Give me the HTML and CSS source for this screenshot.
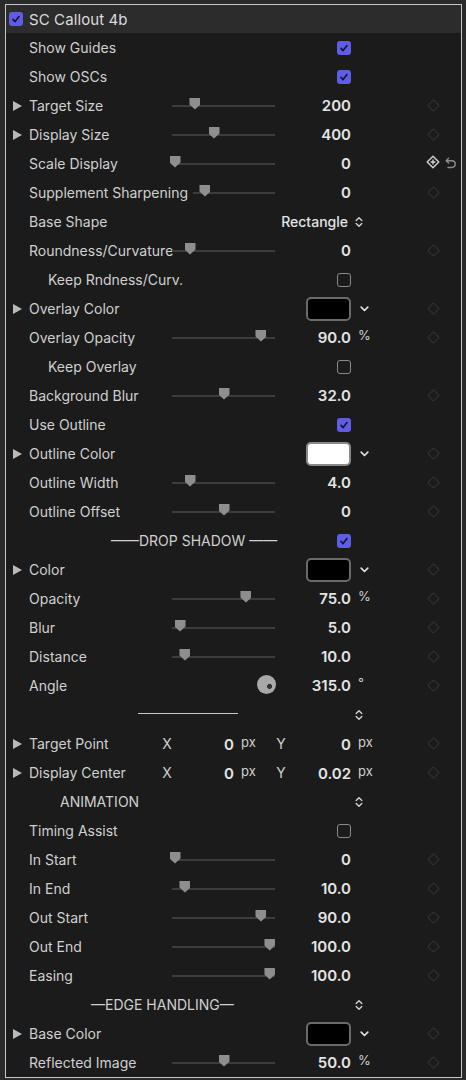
FILE: index.html
```html
<!DOCTYPE html>
<html>
<head>
<meta charset="utf-8">
<link rel="stylesheet" href="styles.css">
</head>
<body>
<div class="panel">
  <div class="head"><span class="cb on"><svg viewBox="0 0 14 14"><path d="M4 7.4l2.1 2.2L10 4.6"/></svg></span><span class="title">SC Callout 4b</span></div>

  <div class="row"><div class="lab">Show Guides</div><div class="val"><span class="cb on"><svg viewBox="0 0 14 14"><path d="M4 7.4l2.1 2.2L10 4.6"/></svg></span></div></div>
  <div class="row"><div class="lab">Show OSCs</div><div class="val"><span class="cb on"><svg viewBox="0 0 14 14"><path d="M4 7.4l2.1 2.2L10 4.6"/></svg></span></div></div>
  <div class="row"><div class="lab tri"><i></i>Target Size</div><div class="sl"><b style="--p:22.3%"></b></div><div class="val">200</div><div class="kf"><span class="dia"></span></div></div>
  <div class="row"><div class="lab tri"><i></i>Display Size</div><div class="sl"><b style="--p:40.8%"></b></div><div class="val">400</div><div class="kf"><span class="dia"></span></div></div>
  <div class="row"><div class="lab">Scale Display</div><div class="sl"><b style="--p:2.9%"></b></div><div class="val">0</div>
    <div class="kf"><svg class="kfon" viewBox="0 0 14 14"><path d="M7 1.2L12.8 7L7 12.8L1.2 7Z"/><path d="M7 4.6v4.8M4.6 7h4.8"/></svg></div>
    <div class="rs"><svg viewBox="0 0 12 13"><path d="M3.6 1.2L1.2 3.7l2.4 2.4M1.4 3.7h5.4a3.4 3.4 0 0 1 0 6.8H3"/></svg></div></div>
  <div class="row"><div class="lab">Supplement Sharpening</div><div class="sl short"><b style="--p:14.6%"></b></div><div class="val">0</div><div class="kf"><span class="dia"></span></div></div>
  <div class="row"><div class="lab">Base Shape</div><div class="val pop">Rectangle</div><div class="unit ud"><svg viewBox="0 0 8 12"><path d="M1.2 4.6L4 1.8l2.8 2.8M1.2 7.4L4 10.2l2.8-2.8"/></svg></div></div>
  <div class="row"><div class="lab">Roundness/Curvature</div><div class="sl"><b style="--p:17.5%"></b></div><div class="val">0</div><div class="kf"><span class="dia"></span></div></div>
  <div class="row"><div class="lab ind">Keep Rndness/Curv.</div><div class="val"><span class="cb"></span></div></div>
  <div class="row"><div class="lab tri"><i></i>Overlay Color</div><div class="val"><span class="sw"></span></div><div class="unit chev"><svg viewBox="0 0 9 6"><path d="M1.2 1.2l3.3 3.3 3.3-3.3"/></svg></div><div class="kf"><span class="dia"></span></div></div>
  <div class="row"><div class="lab">Overlay Opacity</div><div class="sl"><b style="--p:86.4%"></b></div><div class="val">90.0</div><div class="unit sup">%</div><div class="kf"><span class="dia"></span></div></div>
  <div class="row"><div class="lab ind">Keep Overlay</div><div class="val"><span class="cb"></span></div></div>
  <div class="row"><div class="lab">Background Blur</div><div class="sl"><b style="--p:50.5%"></b></div><div class="val">32.0</div><div class="kf"><span class="dia"></span></div></div>
  <div class="row"><div class="lab">Use Outline</div><div class="val"><span class="cb on"><svg viewBox="0 0 14 14"><path d="M4 7.4l2.1 2.2L10 4.6"/></svg></span></div></div>
  <div class="row"><div class="lab tri"><i></i>Outline Color</div><div class="val"><span class="sw white"></span></div><div class="unit chev"><svg viewBox="0 0 9 6"><path d="M1.2 1.2l3.3 3.3 3.3-3.3"/></svg></div><div class="kf"><span class="dia"></span></div></div>
  <div class="row"><div class="lab">Outline Width</div><div class="sl"><b style="--p:17.5%"></b></div><div class="val">4.0</div><div class="kf"><span class="dia"></span></div></div>
  <div class="row"><div class="lab">Outline Offset</div><div class="sl"><b style="--p:50.5%"></b></div><div class="val">0</div><div class="kf"><span class="dia"></span></div></div>
  <div class="row"><div class="lab wide ds">——DROP SHADOW ——</div><div class="val"><span class="cb on"><svg viewBox="0 0 14 14"><path d="M4 7.4l2.1 2.2L10 4.6"/></svg></span></div></div>
  <div class="row"><div class="lab tri"><i></i>Color</div><div class="val"><span class="sw"></span></div><div class="unit chev"><svg viewBox="0 0 9 6"><path d="M1.2 1.2l3.3 3.3 3.3-3.3"/></svg></div><div class="kf"><span class="dia"></span></div></div>
  <div class="row"><div class="lab">Opacity</div><div class="sl"><b style="--p:71.8%"></b></div><div class="val">75.0</div><div class="unit sup">%</div><div class="kf"><span class="dia"></span></div></div>
  <div class="row"><div class="lab">Blur</div><div class="sl"><b style="--p:7.8%"></b></div><div class="val">5.0</div><div class="kf"><span class="dia"></span></div></div>
  <div class="row"><div class="lab">Distance</div><div class="sl"><b style="--p:12.6%"></b></div><div class="val">10.0</div><div class="kf"><span class="dia"></span></div></div>
  <div class="row"><div class="lab">Angle</div><div class="dial"></div><div class="val">315.0</div><div class="unit sup">°</div><div class="kf"><span class="dia"></span></div></div>
  <div class="row"><div class="wide rule"></div><div class="unit ud"><svg viewBox="0 0 8 12"><path d="M1.2 4.6L4 1.8l2.8 2.8M1.2 7.4L4 10.2l2.8-2.8"/></svg></div></div>
  <div class="row xy"><div class="lab tri"><i></i>Target Point</div><div class="ax">X</div><div class="xv">0</div><div class="xu">px</div><div class="ax">Y</div><div class="xv">0</div><div class="xu">px</div><div class="kf"><span class="dia"></span></div></div>
  <div class="row xy"><div class="lab tri"><i></i>Display Center</div><div class="ax">X</div><div class="xv">0</div><div class="xu">px</div><div class="ax">Y</div><div class="xv">0.02</div><div class="xu">px</div><div class="kf"><span class="dia"></span></div></div>
  <div class="row"><div class="lab wide anim">ANIMATION</div><div class="unit ud"><svg viewBox="0 0 8 12"><path d="M1.2 4.6L4 1.8l2.8 2.8M1.2 7.4L4 10.2l2.8-2.8"/></svg></div></div>
  <div class="row"><div class="lab">Timing Assist</div><div class="val"><span class="cb"></span></div></div>
  <div class="row"><div class="lab">In Start</div><div class="sl"><b style="--p:2.9%"></b></div><div class="val">0</div><div class="kf"><span class="dia"></span></div></div>
  <div class="row"><div class="lab">In End</div><div class="sl"><b style="--p:12.6%"></b></div><div class="val">10.0</div><div class="kf"><span class="dia"></span></div></div>
  <div class="row"><div class="lab">Out Start</div><div class="sl"><b style="--p:86.4%"></b></div><div class="val">90.0</div><div class="kf"><span class="dia"></span></div></div>
  <div class="row"><div class="lab">Out End</div><div class="sl"><b style="--p:95.1%"></b></div><div class="val">100.0</div><div class="kf"><span class="dia"></span></div></div>
  <div class="row"><div class="lab">Easing</div><div class="sl"><b style="--p:95.1%"></b></div><div class="val">100.0</div><div class="kf"><span class="dia"></span></div></div>
  <div class="row"><div class="lab wide edge">—EDGE HANDLING—</div><div class="unit ud"><svg viewBox="0 0 8 12"><path d="M1.2 4.6L4 1.8l2.8 2.8M1.2 7.4L4 10.2l2.8-2.8"/></svg></div></div>
  <div class="row"><div class="lab tri"><i></i>Base Color</div><div class="val"><span class="sw"></span></div><div class="unit chev"><svg viewBox="0 0 9 6"><path d="M1.2 1.2l3.3 3.3 3.3-3.3"/></svg></div><div class="kf"><span class="dia"></span></div></div>
  <div class="row"><div class="lab">Reflected Image</div><div class="sl"><b style="--p:50.5%"></b></div><div class="val">50.0</div><div class="unit sup">%</div><div class="kf"><span class="dia"></span></div></div>
</div>
</body>
</html>
```

FILE: styles.css
```css
html, body {
  margin: 0;
  padding: 0;
  background: #2a2a2a;
  font-family: Inter, "Noto Sans", "Liberation Sans", sans-serif;
  color: #d0d0d0;
}

.panel {
  margin: 4px 4px 0 5px;
  border: 1px solid #c6c6c6;
  background: #1b1b1b;
}

.head {
  height: 28px;
  background: #2c2c2c;
  display: flex;
  align-items: center;
  gap: 6px;
  padding-left: 3px;
}

.title {
  font-size: 15px;
  color: #dcdcdc;
  letter-spacing: 0.1px;
}

.row {
  height: 29px;
  display: grid;
  grid-template-columns: 166px 103px 76px 1fr 24px 16px;
  align-items: center;
  font-size: 14px;
}

.lab {
  grid-column: 1;
  padding-left: 23px;
  white-space: nowrap;
  color: #d0d0d0;
  display: flex;
  align-items: center;
}

.lab.tri {
  padding-left: 7px;
}

.lab.tri i {
  display: block;
  width: 0;
  height: 0;
  border-left: 9px solid #b9b9b9;
  border-top: 5.5px solid transparent;
  border-bottom: 5.5px solid transparent;
  margin-right: 7px;
}

.lab.ind {
  padding-left: 42px;
}

.wide {
  grid-column: 1 / 3;
}

.lab.ds { padding-left: 105px; }
.lab.anim { padding-left: 54px; }
.lab.edge { padding-left: 85px; }

.rule {
  margin-left: 132px;
  width: 100px;
  height: 1px;
  background: #c8c8c8;
  margin-bottom: 2px;
}

.sl {
  grid-column: 2;
  height: 12px;
  margin-bottom: 4px;
  background: linear-gradient(#3c3c3c, #3c3c3c) 0 7px / 100% 2px no-repeat;
  display: flex;
}

.sl.short {
  margin-left: 21px;
}

.sl b {
  display: block;
  width: 11px;
  height: 12px;
  margin-left: calc(var(--p) - 5.5px);
  background: #8e8e8e;
  clip-path: polygon(8% 0, 92% 0, 100% 8%, 100% 58%, 50% 100%, 0 58%, 0 8%);
}

.dial {
  grid-column: 2;
  justify-self: end;
  width: 19px;
  height: 19px;
  border-radius: 50%;
  margin-bottom: 2px;
  margin-right: -1px;
  background: radial-gradient(circle at 66% 60%, #333 0 2.2px, #a8a8a8 2.8px);
}

.val {
  grid-column: 3;
  justify-self: end;
  font-size: 15px;
  font-weight: 600;
  color: #e4e4e4;
  display: flex;
  align-items: center;
}

.val.pop {
  font-weight: 500;
  font-size: 14px;
  margin-right: 3px;
}

.unit {
  grid-column: 4;
  display: flex;
  align-items: center;
}

.unit.sup {
  padding-left: 7px;
  font-size: 13px;
  color: #cfcfcf;
  margin-bottom: 6px;
}

.unit.chev { padding-left: 9px; }
.unit.chev svg {
  width: 9px;
  height: 6px;
  fill: none;
  stroke: #dedede;
  stroke-width: 1.7;
  stroke-linecap: round;
  stroke-linejoin: round;
}

.unit.ud { padding-left: 4px; }
.unit.ud svg {
  width: 8px;
  height: 12px;
  fill: none;
  stroke: #d0d0d0;
  stroke-width: 1.4;
  stroke-linecap: round;
  stroke-linejoin: round;
}

.cb {
  width: 14px;
  height: 14px;
  box-sizing: border-box;
  border-radius: 3px;
  border: 1.5px solid #8a8a8a;
  display: block;
}

.cb.on {
  border: none;
  background: #5f5ce6;
}

.cb svg {
  display: block;
  width: 14px;
  height: 14px;
  fill: none;
  stroke: #15152b;
  stroke-width: 1.6;
  stroke-linecap: round;
  stroke-linejoin: round;
}

.sw {
  display: block;
  width: 45px;
  height: 24px;
  box-sizing: border-box;
  border: 2px solid #6a6a6a;
  border-radius: 5px;
  background: #000;
}

.sw.white {
  background: #fff;
  border-color: #8a8a8a;
}

.kf {
  grid-column: 5;
  justify-self: center;
  display: flex;
  align-items: center;
}

.dia {
  display: block;
  width: 9px;
  height: 9px;
  box-sizing: border-box;
  border: 1.5px solid #333;
  border-radius: 1px;
  transform: rotate(45deg);
}

.kfon {
  width: 14px;
  height: 14px;
  fill: none;
  stroke: #d2d2d2;
  stroke-width: 1.4;
  stroke-linejoin: round;
  margin-bottom: 3px;
}

.rs {
  grid-column: 6;
  display: flex;
  align-items: center;
}

.rs svg {
  width: 12px;
  height: 13px;
  fill: none;
  stroke: #8c8c8c;
  stroke-width: 1.4;
  stroke-linecap: round;
  stroke-linejoin: round;
}

.row.xy {
  grid-template-columns: 152px 18px 58px 38px 18px 61px 70px 24px 16px;
}

.row.xy .kf { grid-column: 8; }

.ax {
  text-align: center;
  color: #cfcfcf;
  font-size: 14px;
}

.xv {
  justify-self: end;
  font-size: 15px;
  font-weight: 600;
  color: #e4e4e4;
  margin-top: 2px;
}

.xu {
  padding-left: 7px;
  font-size: 13px;
  color: #cfcfcf;
  margin-bottom: 4px;
}
```
